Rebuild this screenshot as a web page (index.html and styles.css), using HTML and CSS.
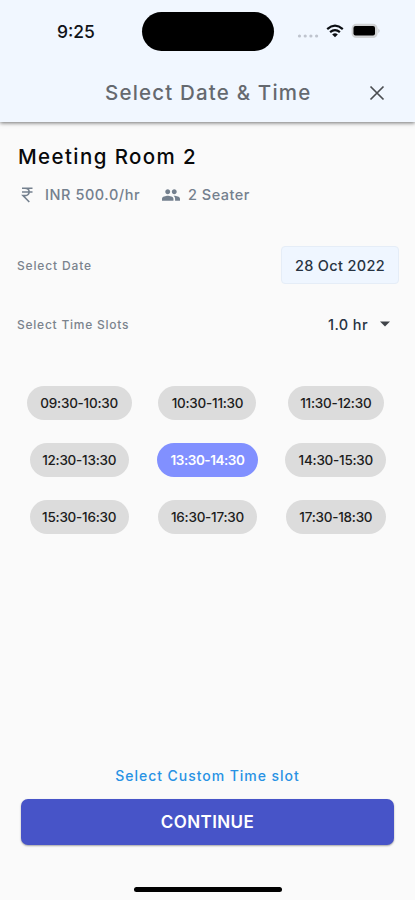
FILE: index.html
```html
<!DOCTYPE html>
<html lang="en">
<head>
<meta charset="utf-8">
<title>Select Date &amp; Time</title>
<link rel="stylesheet" href="styles.css">
</head>
<body>
<div class="screen">
  <header class="header">
    <div class="status">
      <span class="clock">9:25</span>
      <span class="island"></span>
      <span class="signals">
        <svg class="dots" width="22" height="6" viewBox="0 0 22 6" fill="#bfc4ce"><circle cx="2.5" cy="3" r="1.6"/><circle cx="8.2" cy="3" r="1.6"/><circle cx="13.9" cy="3" r="1.6"/><circle cx="19.6" cy="3" r="1.6"/></svg>
        <svg class="wifi" width="18" height="14" viewBox="0 0 18 14" fill="none" stroke="#0b0e12" stroke-width="2.2"><path d="M1.2 5.1Q9-1.7 16.8 5.1"/><path d="M4.1 8.2Q9 4 13.9 8.2"/><path d="M6.2 10.4Q9 8.2 11.8 10.4L9 13.2Z" fill="#0b0e12" stroke="none"/></svg>
        <svg class="battery" width="30" height="16" viewBox="0 0 30 16"><rect x=".6" y=".8" width="26" height="14.2" rx="4.6" fill="#d0d2d4"/><path d="M27.4 5.4Q29.8 7.8 27.4 10.2Z" fill="#c3c6ca"/><rect x="2.5" y="3" width="21.5" height="9.6" rx="2" fill="#000"/></svg>
      </span>
    </div>
    <div class="titlebar">
      <h1 class="title"><span>Select Date &amp; Time</span></h1>
      <svg class="close" width="16" height="16" viewBox="0 0 16 16" fill="none" stroke="#4b4e52" stroke-width="1.7"><path d="M1.5 1.5l13 13M14.5 1.5l-13 13"/></svg>
    </div>
  </header>
  <main class="content">
    <h2 class="room"><span>Meeting Room 2</span></h2>
    <div class="facts">
      <svg class="rupee" width="12" height="16" viewBox="0 0 12 16" fill="none" stroke="#74808e" stroke-width="1.6"><path d="M1 1.3h10.500M1 5h10.500M1 1.3h3c5.500 0 5.500 7.300 0 7.300H2L8.300 15"/></svg>
      <span class="price">INR 500.0/hr</span>
      <svg class="people" width="18" height="12" viewBox="1 5 22 14" fill="#74808e"><path d="M16 11c1.660 0 2.990-1.340 2.990-3S17.660 5 16 5s-3 1.340-3 3 1.340 3 3 3zm-8 0c1.660 0 2.990-1.340 2.990-3S9.660 5 8 5 5 6.340 5 8s1.340 3 3 3zm0 2c-2.330 0-7 1.170-7 3.500V19h14v-2.500C15 14.170 10.330 13 8 13zm8 0c-.29 0-.62.020-.97.050C16.190 13.890 17 15.020 17 16.500V19h6v-2.500c0-2.330-4.670-3.500-7-3.500z"/></svg>
      <span class="seats">2 Seater</span>
    </div>
    <div class="row date-row">
      <span class="label label-date">Select Date</span>
      <span class="date"><span>28 Oct 2022</span></span>
    </div>
    <div class="row time-row">
      <span class="label label-time">Select Time Slots</span>
      <span class="duration"><span class="hours">1.0 hr</span><svg width="10" height="6" viewBox="0 0 10 6" fill="#3f4348"><path d="M0 .5h10L5 5.500z"/></svg></span>
    </div>
    <div class="slots">
      <span class="slot w105">09:30-10:30</span><span class="slot w98">10:30-11:30</span><span class="slot w96">11:30-12:30</span>
      <span class="slot w99">12:30-13:30</span><span class="slot w101 selected">13:30-14:30</span><span class="slot w101">14:30-15:30</span>
      <span class="slot w99">15:30-16:30</span><span class="slot w99">16:30-17:30</span><span class="slot w100">17:30-18:30</span>
    </div>
  </main>
  <footer class="footer">
    <a class="custom">Select Custom Time slot</a>
    <div class="continue"><span>CONTINUE</span></div>
    <div class="home"></div>
  </footer>
</div>
</body>
</html>
```
FILE: styles.css
```css
* { box-sizing: border-box; }
body { margin: 0; background: #fafafa; font-family: Inter, "Open Sans", sans-serif; }
h1, h2 { margin: 0; }
svg { display: block; flex: none; }
span, a { white-space: nowrap; }
.screen { width: 415px; height: 900px; display: flex; flex-direction: column; overflow: hidden; background: #fafafa; }
.header { height: 122px; background: #f1f7ff; box-shadow: 0 1px 4px rgba(0,0,0,.55); flex: none; }
.status { height: 63px; display: flex; padding: 12px 33px 0 57px; }
.clock { width: 85px; height: 39px; font-size: 17.5px; line-height: 39px; font-weight: 500; color: #111418; }
.island { width: 132px; height: 39px; border-radius: 20px; background: #000; }
.signals { flex: 1; height: 39px; display: flex; align-items: center; padding-left: 23px; }
.dots { margin-top: 9px; }
.wifi { margin-left: 7px; margin-top: -2px; }
.battery { margin-left: 7px; margin-top: -1px; }
.titlebar { height: 59px; display: flex; align-items: center; padding: 0 30px 0 105px; justify-content: space-between; }
.title { font-size: 20.5px; line-height: 28px; font-weight: 500; color: #65696f; letter-spacing: 1.18px; }
.content { padding: 23px 16px 0 17px; flex: 1; }
.room { font-size: 20.5px; line-height: 24px; font-weight: 500; color: #08090a; letter-spacing: 1.4px; padding-left: 1px; }
.facts { height: 20px; margin-top: 16px; padding-left: 4px; display: flex; align-items: center; color: #74808e; font-size: 14.5px; line-height: 20px; font-weight: 500; }
.price { margin-left: 12px; width: 95px; letter-spacing: .55px; }
.people { margin-left: 22px; }
.seats { margin-left: 8px; letter-spacing: .5px; }
.row { display: flex; align-items: center; justify-content: space-between; }
.date-row { margin-top: 41px; height: 38px; }
.time-row { margin-top: 25px; height: 30px; padding-right: 9px; }
.label { color: #7b838d; font-size: 12px; font-weight: 500; letter-spacing: .85px; }
.label-time { letter-spacing: .76px; }
.date { width: 118px; height: 38px; display: flex; align-items: center; justify-content: center; background: #eff6ff; border: 1px solid #e5edf7; border-radius: 4px; color: #273342; font-size: 14.5px; font-weight: 500; letter-spacing: .35px; }
.duration { display: flex; align-items: center; gap: 12px; color: #273342; font-size: 14.5px; font-weight: 500; letter-spacing: .4px; }
.slots { margin: 47px -1px 0 -2px; display: grid; grid-template-columns: repeat(3, 1fr); row-gap: 23px; justify-items: center; }
.slot { height: 34px; line-height: 35px; text-align: center; border-radius: 17px; background: #dcdcdc; color: #1d1d1d; font-size: 13.5px; font-weight: 500; letter-spacing: -.25px; }
.selected { background: #8190ff; color: #fff; font-weight: 600; letter-spacing: -.45px; }
.w105 { width: 105px; }
.w101 { width: 101px; }
.w100 { width: 100px; }
.w99 { width: 99px; }
.w98 { width: 98px; }
.w96 { width: 96px; }
.footer { flex: none; height: 134px; display: flex; flex-direction: column; align-items: center; }
.custom { height: 20px; line-height: 20px; font-size: 14px; font-weight: 500; color: #2892e4; letter-spacing: .95px; }
.continue { margin-top: 13px; width: 373px; height: 46px; border-radius: 7px; background: #4754c8; box-shadow: 0 1px 2px rgba(0,0,0,.35); display: flex; align-items: center; justify-content: center; color: #fff; font-size: 17px; font-weight: 600; letter-spacing: .4px; }
.home { margin-top: 42px; width: 148px; height: 5px; border-radius: 3px; background: #000; }
```
